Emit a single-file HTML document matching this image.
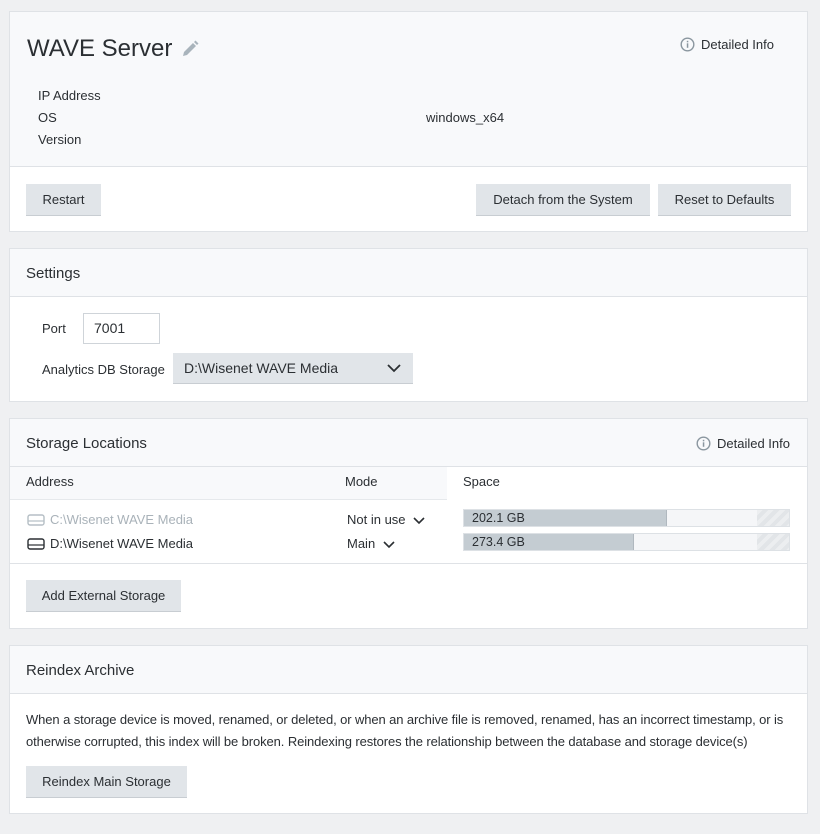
<!DOCTYPE html>
<html><head><style>
body{margin:0;width:820px;height:834px;background:#eff0f2;font-family:"Liberation Sans",sans-serif;font-size:13px;color:#2b2f33;position:relative;overflow:hidden}
.a{position:absolute}
.p{position:absolute;left:9px;width:797px;background:#fff;border:1px solid #dfe2e6}
.h{position:absolute;left:0;right:0;top:0;background:#f8f9fb;border-bottom:1px solid #dfe2e6}
.btn{position:absolute;background:#e1e5e9;border-bottom:1px solid #c8cdd2;height:31px;line-height:31px;text-align:center;font-size:13px;color:#2b2f33}
.t{font-size:15px}
.bar{position:absolute;left:463px;width:327px;height:18px;background:#f5f6f8;border:1px solid #dde1e5;box-sizing:border-box}
.fill{position:absolute;left:0;top:0;bottom:0;background:#c4ccd2;border-right:1px solid #b0b8bf;font-size:12.5px;line-height:17px;padding-left:8px;box-sizing:border-box}
.hatch{position:absolute;right:0;top:0;bottom:0;width:32px;background:repeating-linear-gradient(135deg,#eceef0 0 4px,#e2e5e8 4px 8px)}
</style></head><body>
<div class="p" style="top:11px;height:219px">
 <div class="h" style="height:154px"></div>
 <div class="a" style="left:17px;top:23px;font-size:24px;color:#2b2f33">WAVE Server</div>
 <svg class="a" style="left:171px;top:28px" width="18" height="18" viewBox="0 0 18 18"><path d="M2 16l1-4 9-9 3 3-9 9z M13 2l1.5-1.5 3 3L16 5z" fill="#a9b4bc"/></svg>
 <svg class="a" style="left:670px;top:25px" width="15" height="15" viewBox="0 0 15 15"><circle cx="7.5" cy="7.5" r="6.3" fill="none" stroke="#8a969f" stroke-width="1.4"/><rect x="6.8" y="6.3" width="1.5" height="4.5" fill="#8a969f"/><rect x="6.8" y="3.8" width="1.5" height="1.5" fill="#8a969f"/></svg>
 <div class="a" style="left:691px;top:25px">Detailed Info</div>
 <div class="a" style="left:28px;top:76px">IP Address</div>
 <div class="a" style="left:28px;top:98px">OS</div>
 <div class="a" style="left:416px;top:98px">windows_x64</div>
 <div class="a" style="left:28px;top:120px">Version</div>
 <div class="btn" style="left:16px;top:172px;width:75px">Restart</div>
 <div class="btn" style="left:466px;top:172px;width:174px">Detach from the System</div>
 <div class="btn" style="left:648px;top:172px;width:133px">Reset to Defaults</div>
</div>
<div class="p" style="top:248px;height:152px">
 <div class="h" style="height:47px"></div>
 <div class="a t" style="left:16px;top:16px">Settings</div>
 <div class="a" style="left:32px;top:72px">Port</div>
 <div class="a" style="left:73px;top:64px;width:77px;height:31px;border:1px solid #cfd4d9;box-sizing:border-box;line-height:29px;padding-left:10px;font-size:14px">7001</div>
 <div class="a" style="left:32px;top:113px">Analytics DB Storage</div>
 <div class="btn" style="left:163px;top:104px;width:240px;text-align:left;padding-left:11px;box-sizing:border-box;font-size:14px">D:\Wisenet WAVE Media</div>
 <svg class="a" style="left:377px;top:114px" width="14" height="10"><path d="M1 2l6 6 6-6" fill="none" stroke="#2b2f33" stroke-width="1.8"/></svg>
</div>
<div class="p" style="top:418px;height:209px">
 <div class="h" style="height:47px"></div>
 <div class="a t" style="left:16px;top:16px">Storage Locations</div>
 <svg class="a" style="left:686px;top:17px" width="15" height="15" viewBox="0 0 15 15"><circle cx="7.5" cy="7.5" r="6.3" fill="none" stroke="#8a969f" stroke-width="1.4"/><rect x="6.8" y="6.3" width="1.5" height="4.5" fill="#8a969f"/><rect x="6.8" y="3.8" width="1.5" height="1.5" fill="#8a969f"/></svg>
 <div class="a" style="left:707px;top:17px">Detailed Info</div>
 <div class="a" style="left:0;top:48px;width:437px;height:32px;background:#f8f9fb;border-bottom:1px solid #e6e9ec"></div>
 <div class="a" style="left:16px;top:55px">Address</div>
 <div class="a" style="left:335px;top:55px">Mode</div>
 <div class="a" style="left:453px;top:55px">Space</div>
 <svg class="a" style="left:17px;top:95px" width="18" height="12"><rect x="1" y="1" width="16" height="10" rx="2" fill="none" stroke="#b5bec5" stroke-width="1.4"/><line x1="1" y1="7" x2="17" y2="7" stroke="#b5bec5" stroke-width="1.2"/></svg>
 <div class="a" style="left:40px;top:93px;color:#a9b2b9">C:\Wisenet WAVE Media</div>
 <div class="a" style="left:337px;top:93px">Not in use</div>
 <svg class="a" style="left:403px;top:97px" width="12" height="9"><path d="M1 2l5 5 5-5" fill="none" stroke="#2b2f33" stroke-width="1.6"/></svg>
 <svg class="a" style="left:17px;top:119px" width="18" height="12"><rect x="1" y="1" width="16" height="10" rx="2" fill="none" stroke="#2b2f33" stroke-width="1.4"/><line x1="1" y1="7" x2="17" y2="7" stroke="#2b2f33" stroke-width="1.2"/></svg>
 <div class="a" style="left:40px;top:117px">D:\Wisenet WAVE Media</div>
 <div class="a" style="left:337px;top:117px">Main</div>
 <svg class="a" style="left:373px;top:121px" width="12" height="9"><path d="M1 2l5 5 5-5" fill="none" stroke="#2b2f33" stroke-width="1.6"/></svg>
 <div class="a" style="left:0;right:0;top:144px;border-top:1px solid #dfe2e6"></div>
 <div class="btn" style="left:16px;top:161px;width:155px">Add External Storage</div>
</div>
<div class="bar" style="top:509px"><div class="fill" style="width:203px">202.1 GB</div><div class="hatch"></div></div>
<div class="bar" style="top:533px"><div class="fill" style="width:170px">273.4 GB</div><div class="hatch"></div></div>
<div class="p" style="top:645px;height:167px">
 <div class="h" style="height:47px"></div>
 <div class="a t" style="left:16px;top:16px">Reindex Archive</div>
 <div class="a" style="left:16px;top:63px;width:765px;line-height:22px;letter-spacing:-0.1px">When a storage device is moved, renamed, or deleted, or when an archive file is removed, renamed, has an incorrect timestamp, or is otherwise corrupted, this index will be broken. Reindexing restores the relationship between the database and storage device(s)</div>
 <div class="btn" style="left:16px;top:120px;width:161px">Reindex Main Storage</div>
</div>
</body></html>
